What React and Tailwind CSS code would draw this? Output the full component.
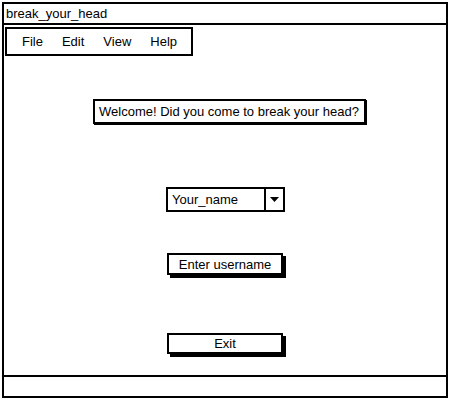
export default function App() {
  return (
    <div className="w-[450px] h-[400px] bg-white p-[2px] font-['Liberation_Sans',sans-serif] text-[13px] leading-none text-black">
      <div className="h-full border-2 border-black flex flex-col">
        <div className="h-[21px] shrink-0 border-b-2 border-black flex items-center pl-[2px]">
          break_your_head
        </div>
        <div className="flex-1 flex flex-col items-start">
          <div className="mt-[2px] ml-[1px] w-[188px] h-[29px] border-2 border-black flex items-center pl-[15px] gap-[19px]">
            <span>File</span>
            <span>Edit</span>
            <span>View</span>
            <span>Help</span>
          </div>
          <div className="mt-[43px] ml-[89px] w-[273px] h-[25px] border-2 border-black shadow-[1px_1px_0_#000] flex items-center pl-[4px]">
            Welcome! Did you come to break your head?
          </div>
          <div className="mt-[63px] ml-[162px] w-[119px] h-[25px] border-2 border-black flex">
            <div className="w-[98px] flex items-center pl-[4px] border-r-2 border-black">Your_name</div>
            <div className="flex-1 flex items-center justify-center">
              <svg width="9" height="5" viewBox="0 0 9 5">
                <path d="M0 0 L9 0 L4.5 5 Z" fill="#000" />
              </svg>
            </div>
          </div>
          <div className="mt-[41px] ml-[163px] w-[116px] h-[22px] border-2 border-black shadow-[3px_3px_0_#000] flex items-center justify-center">
            Enter username
          </div>
          <div className="mt-[58px] ml-[163px] w-[116px] h-[21px] border-2 border-black shadow-[3px_3px_0_#000] flex items-center justify-center">
            Exit
          </div>
        </div>
        <div className="h-[21px] shrink-0 border-t-2 border-black" />
      </div>
    </div>
  );
}
